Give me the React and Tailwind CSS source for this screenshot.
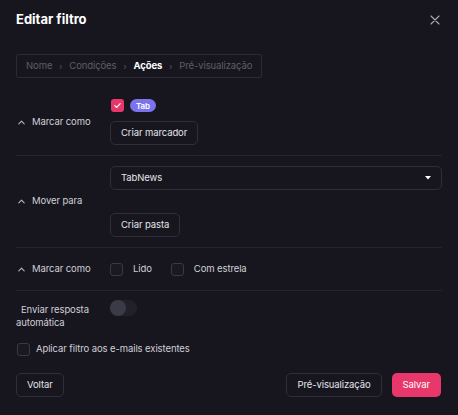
import React from "react";

const Chevron = () => (
  <svg width="9" height="9" viewBox="0 0 10 10" className="shrink-0">
    <path d="M2 6.5 L5 3.5 L8 6.5" fill="none" stroke="#b9b8c2" strokeWidth="1.2" strokeLinecap="round" strokeLinejoin="round" />
  </svg>
);

const Box = ({ checked }) =>
  checked ? (
    <div className="w-[13px] h-[13px] rounded-[3px] bg-[#e8386b] flex items-center justify-center">
      <svg width="9" height="9" viewBox="0 0 10 10">
        <path d="M2 5.2 L4.2 7.2 L8 3" fill="none" stroke="#fff" strokeWidth="1.3" strokeLinecap="round" strokeLinejoin="round" />
      </svg>
    </div>
  ) : (
    <div className="w-[13px] h-[13px] rounded-[3px] border border-[#3a3944] bg-[#1a1922]" />
  );

const Btn = ({ children, className = "" }) => (
  <div className={"h-6 px-[10px] flex items-center rounded-[5px] border border-[#2f2e39] bg-[#17161f] text-[#e4e4ea] " + className}>
    {children}
  </div>
);

export default function App() {
  return (
    <div
      className="w-[458px] h-[415px] bg-[#17161f] px-4 flex flex-col text-[#cfcfd6] text-[9.5px] tracking-[-0.1px]"
      style={{ fontFamily: "Inter, 'Noto Sans', sans-serif" }}
    >
      <div className="h-10 flex items-center justify-between">
        <div className="text-[13px] font-bold text-white tracking-normal">Editar filtro</div>
        <svg width="10" height="10" viewBox="0 0 10 10" className="mr-[2px]">
          <path d="M1 1 L9 9 M9 1 L1 9" stroke="#a9a8b3" strokeWidth="1.1" strokeLinecap="round" />
        </svg>
      </div>

      <div className="mt-[14px] self-start h-6 pl-[9px] pr-[9px] flex items-center gap-[7px] border border-[#2a2934] rounded-[2px] text-[#5e5d68]">
        <span>Nome</span>
        <span className="text-[8px]">›</span>
        <span>Condições</span>
        <span className="text-[8px]">›</span>
        <span className="font-bold text-white">Ações</span>
        <span className="text-[8px]">›</span>
        <span>Pré-visualização</span>
      </div>

      {/* Section 1 */}
      <div className="mt-[21px] flex items-center pb-[10px] border-b border-[#25242e]">
        <div className="w-[94px] flex items-center gap-[6px] pl-[1px]">
          <Chevron />
          <span>Marcar como</span>
        </div>
        <div className="flex flex-col gap-[9px] items-start">
          <div className="flex items-center gap-[6px] ml-[1px]">
            <Box checked />
            <div className="h-[13px] px-[6px] rounded-full bg-[#7b73ee] text-white text-[8px] font-semibold flex items-center">Tab</div>
          </div>
          <Btn>Criar marcador</Btn>
        </div>
      </div>

      {/* Section 2 */}
      <div className="flex items-center py-[10px] border-b border-[#25242e]">
        <div className="w-[94px] flex items-center gap-[6px] pl-[1px]">
          <Chevron />
          <span>Mover para</span>
        </div>
        <div className="flex-1 flex flex-col gap-[23px] items-start">
          <div className="w-full h-6 px-[10px] flex items-center justify-between rounded-[5px] border border-[#2f2e39] text-[#e4e4ea]">
            <span>TabNews</span>
            <svg width="6" height="4" viewBox="0 0 6 4">
              <path d="M0 0 L6 0 L3 3.5 Z" fill="#fff" />
            </svg>
          </div>
          <Btn>Criar pasta</Btn>
        </div>
      </div>

      {/* Section 3 */}
      <div className="flex items-center h-[43px] border-b border-[#25242e]">
        <div className="w-[94px] flex items-center gap-[6px] pl-[1px]">
          <Chevron />
          <span>Marcar como</span>
        </div>
        <div className="flex items-center">
          <Box />
          <span className="ml-[10px]">Lido</span>
          <div className="ml-[19px]"><Box /></div>
          <span className="ml-[10px]">Com estrela</span>
        </div>
      </div>

      {/* Auto reply */}
      <div className="flex items-start pt-[9px]">
        <div className="w-[94px] leading-[13px] pt-[3px]">
          <div className="indent-[5px]">Enviar resposta</div>
          <div>automática</div>
        </div>
        <div className="w-[27px] h-[16px] rounded-full bg-[#22212b] relative">
          <div className="absolute left-0 top-0 w-[16px] h-[16px] rounded-full bg-[#3b3a47]" />
        </div>
      </div>

      <div className="mt-[13px] flex items-center gap-[6px] pl-[1px]">
        <Box />
        <span>Aplicar filtro aos e-mails existentes</span>
      </div>

      <div className="mt-[17px] flex items-center pr-[1px]">
        <Btn>Voltar</Btn>
        <div className="flex-1" />
        <Btn>Pré-visualização</Btn>
        <div className="ml-[10px] h-6 px-[11px] flex items-center rounded-[5px] bg-[#e8386b] text-white">Salvar</div>
      </div>
    </div>
  );
}
